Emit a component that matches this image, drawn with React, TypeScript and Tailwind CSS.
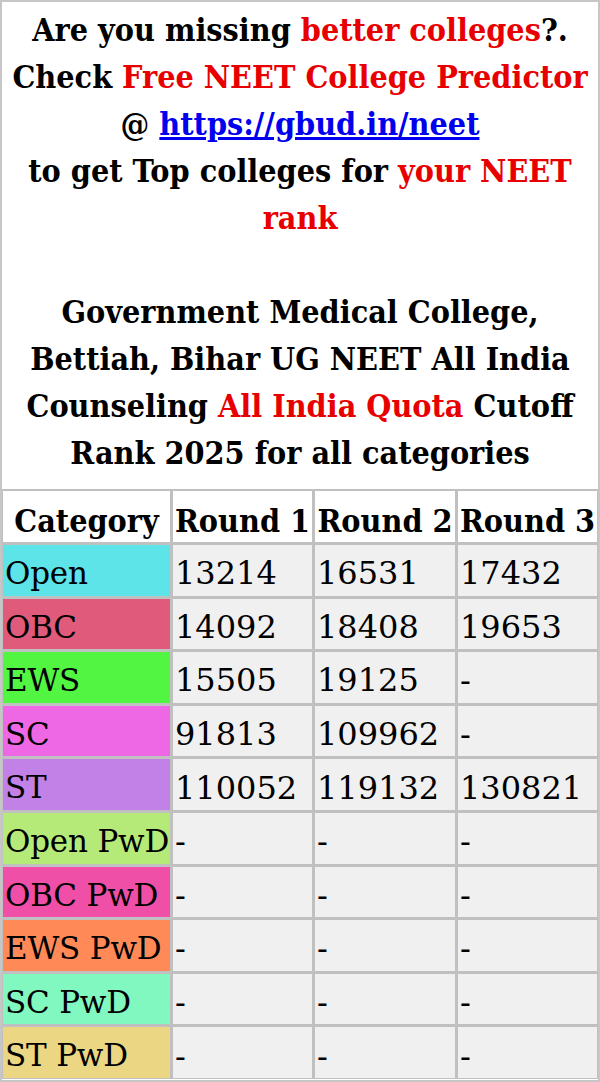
import React from 'react';

type Row = { name: string; color: string; r1: string; r2: string; r3: string };

const rows: Row[] = [
  { name: 'Open', color: 'bg-[#5ce4e8]', r1: '13214', r2: '16531', r3: '17432' },
  { name: 'OBC', color: 'bg-[#e05b7b]', r1: '14092', r2: '18408', r3: '19653' },
  { name: 'EWS', color: 'bg-[#52f542]', r1: '15505', r2: '19125', r3: '-' },
  { name: 'SC', color: 'bg-[#ee68e6]', r1: '91813', r2: '109962', r3: '-' },
  { name: 'ST', color: 'bg-[#c281e6]', r1: '110052', r2: '119132', r3: '130821' },
  { name: 'Open PwD', color: 'bg-[#b6ea78]', r1: '-', r2: '-', r3: '-' },
  { name: 'OBC PwD', color: 'bg-[#ef4fa6]', r1: '-', r2: '-', r3: '-' },
  { name: 'EWS PwD', color: 'bg-[#ff8a58]', r1: '-', r2: '-', r3: '-' },
  { name: 'SC PwD', color: 'bg-[#80f8bf]', r1: '-', r2: '-', r3: '-' },
  { name: 'ST PwD', color: 'bg-[#ebd684]', r1: '-', r2: '-', r3: '-' },
];

const font = { fontFamily: '"DejaVu Serif", serif' };

export default function App() {
  return (
    <div className="w-[600px] h-[1082px] overflow-hidden border-2 border-[#c6c6c6] bg-white text-black" style={font}>
      {/* Promo + title */}
      <div className="pt-[5px] text-center font-bold font-stretch-condensed text-[32px] leading-[47px] whitespace-nowrap">
        <div>Are you missing <span className="text-[#e80000]">better colleges</span>?.</div>
        <div>Check <span className="text-[#e80000]">Free NEET College Predictor</span></div>
        <div>@ <a href="#" className="text-[#0000ee] underline">https://gbud.in/neet</a></div>
        <div>to get Top colleges for <span className="text-[#e80000]">your NEET</span></div>
        <div className="text-[#e80000]">rank</div>
        <div>&nbsp;</div>
        <div>Government Medical College,</div>
        <div>Bettiah, Bihar UG NEET All India</div>
        <div>Counseling <span className="text-[#e80000]">All India Quota</span> Cutoff</div>
        <div>Rank 2025 for all categories</div>
      </div>

      {/* Cutoff table */}
      <div className="mt-[12px] grid grid-cols-[167px_139px_140px_139px] gap-[3px] bg-[#c0c0c0] p-[1px] pt-[2px] text-[32px]">
        <div className="h-[51px] pt-[9px] bg-white flex items-center justify-center font-bold font-stretch-condensed">Category</div>
        <div className="h-[51px] pt-[9px] bg-white flex items-center justify-center font-bold font-stretch-condensed whitespace-nowrap">Round 1</div>
        <div className="h-[51px] pt-[9px] bg-white flex items-center justify-center font-bold font-stretch-condensed whitespace-nowrap">Round 2</div>
        <div className="h-[51px] pt-[9px] bg-white flex items-center justify-center font-bold font-stretch-condensed whitespace-nowrap">Round 3</div>
        {rows.map((r) => (
          <React.Fragment key={r.name}>
            <div className={`h-[50.6px] pt-[6px] ${r.color} flex items-center pl-[2px] whitespace-nowrap text-[31px] tracking-[-0.2px]`}>{r.name}</div>
            <div className="h-[50.6px] pt-[6px] bg-[#f0f0f0] flex items-center pl-[2px]">{r.r1}</div>
            <div className="h-[50.6px] pt-[6px] bg-[#f0f0f0] flex items-center pl-[2px]">{r.r2}</div>
            <div className="h-[50.6px] pt-[6px] bg-[#f0f0f0] flex items-center pl-[2px]">{r.r3}</div>
          </React.Fragment>
        ))}
      </div>
    </div>
  );
}
